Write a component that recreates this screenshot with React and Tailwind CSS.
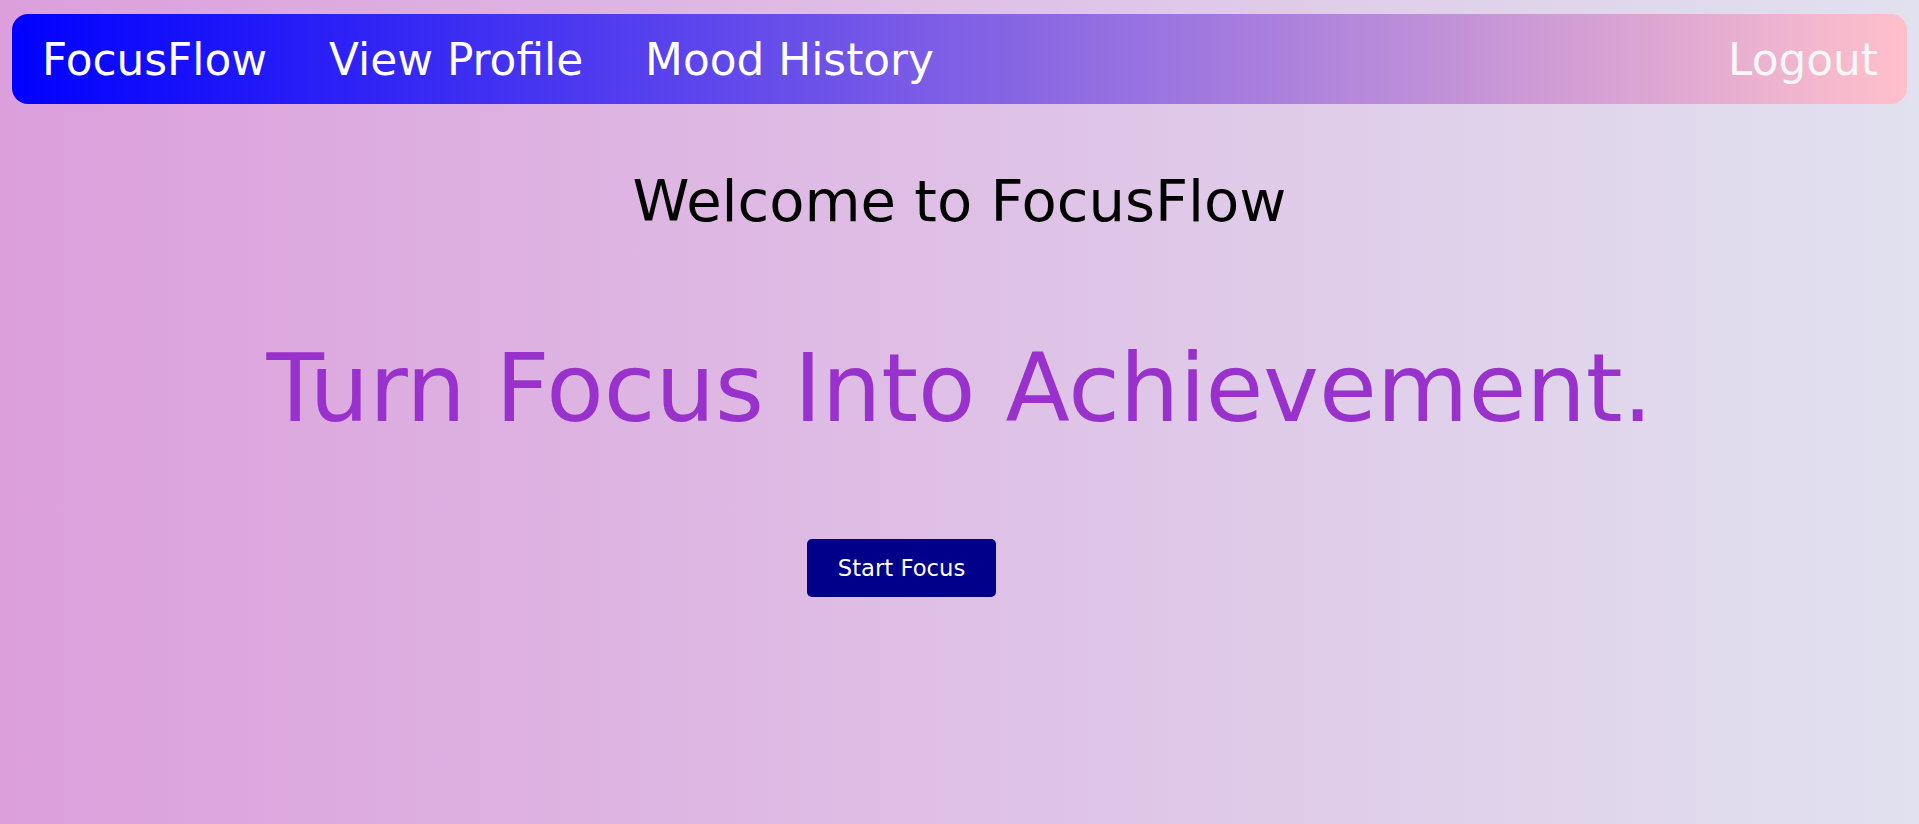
import React from 'react';

function NavBar() {
  return (
    <nav className="mx-[12px] mt-[13px] h-[90px] flex items-center justify-between pl-[30px] pr-[29px] rounded-[16px] bg-linear-to-r/srgb from-[#0000ff] to-[#ffc0cb] text-white text-[43.8px]">
      <div className="flex items-center gap-[62px]">
        <a href="#" className="leading-[normal]">FocusFlow</a>
        <a href="#" className="leading-[normal]">View Profile</a>
        <a href="#" className="leading-[normal]">Mood History</a>
      </div>
      <a href="#" className="leading-[normal] text-[#f7f7f7]">Logout</a>
    </nav>
  );
}

export default function App() {
  return (
    <div className="min-h-screen overflow-hidden bg-linear-to-r/srgb from-[#dc9fdc] to-[#e1e1ef] font-['DejaVu_Sans',sans-serif] pt-px">
      <NavBar />
      <main className="flex flex-col items-center">
        <h1 className="mt-[64px] text-[57.6px] leading-[normal] text-black">Welcome to FocusFlow</h1>
        <h2 className="mt-[99px] text-[94px] leading-[normal] text-[#9932cc]">Turn Focus Into Achievement.</h2>
        <div className="mt-[96px] w-full flex justify-center">
          <button
            type="button"
            className="mr-[116px] px-[31px] py-[16px] rounded-[5px] bg-[#00008b] text-white text-[22.7px] leading-[normal]"
          >
            Start Focus
          </button>
        </div>
      </main>
    </div>
  );
}
